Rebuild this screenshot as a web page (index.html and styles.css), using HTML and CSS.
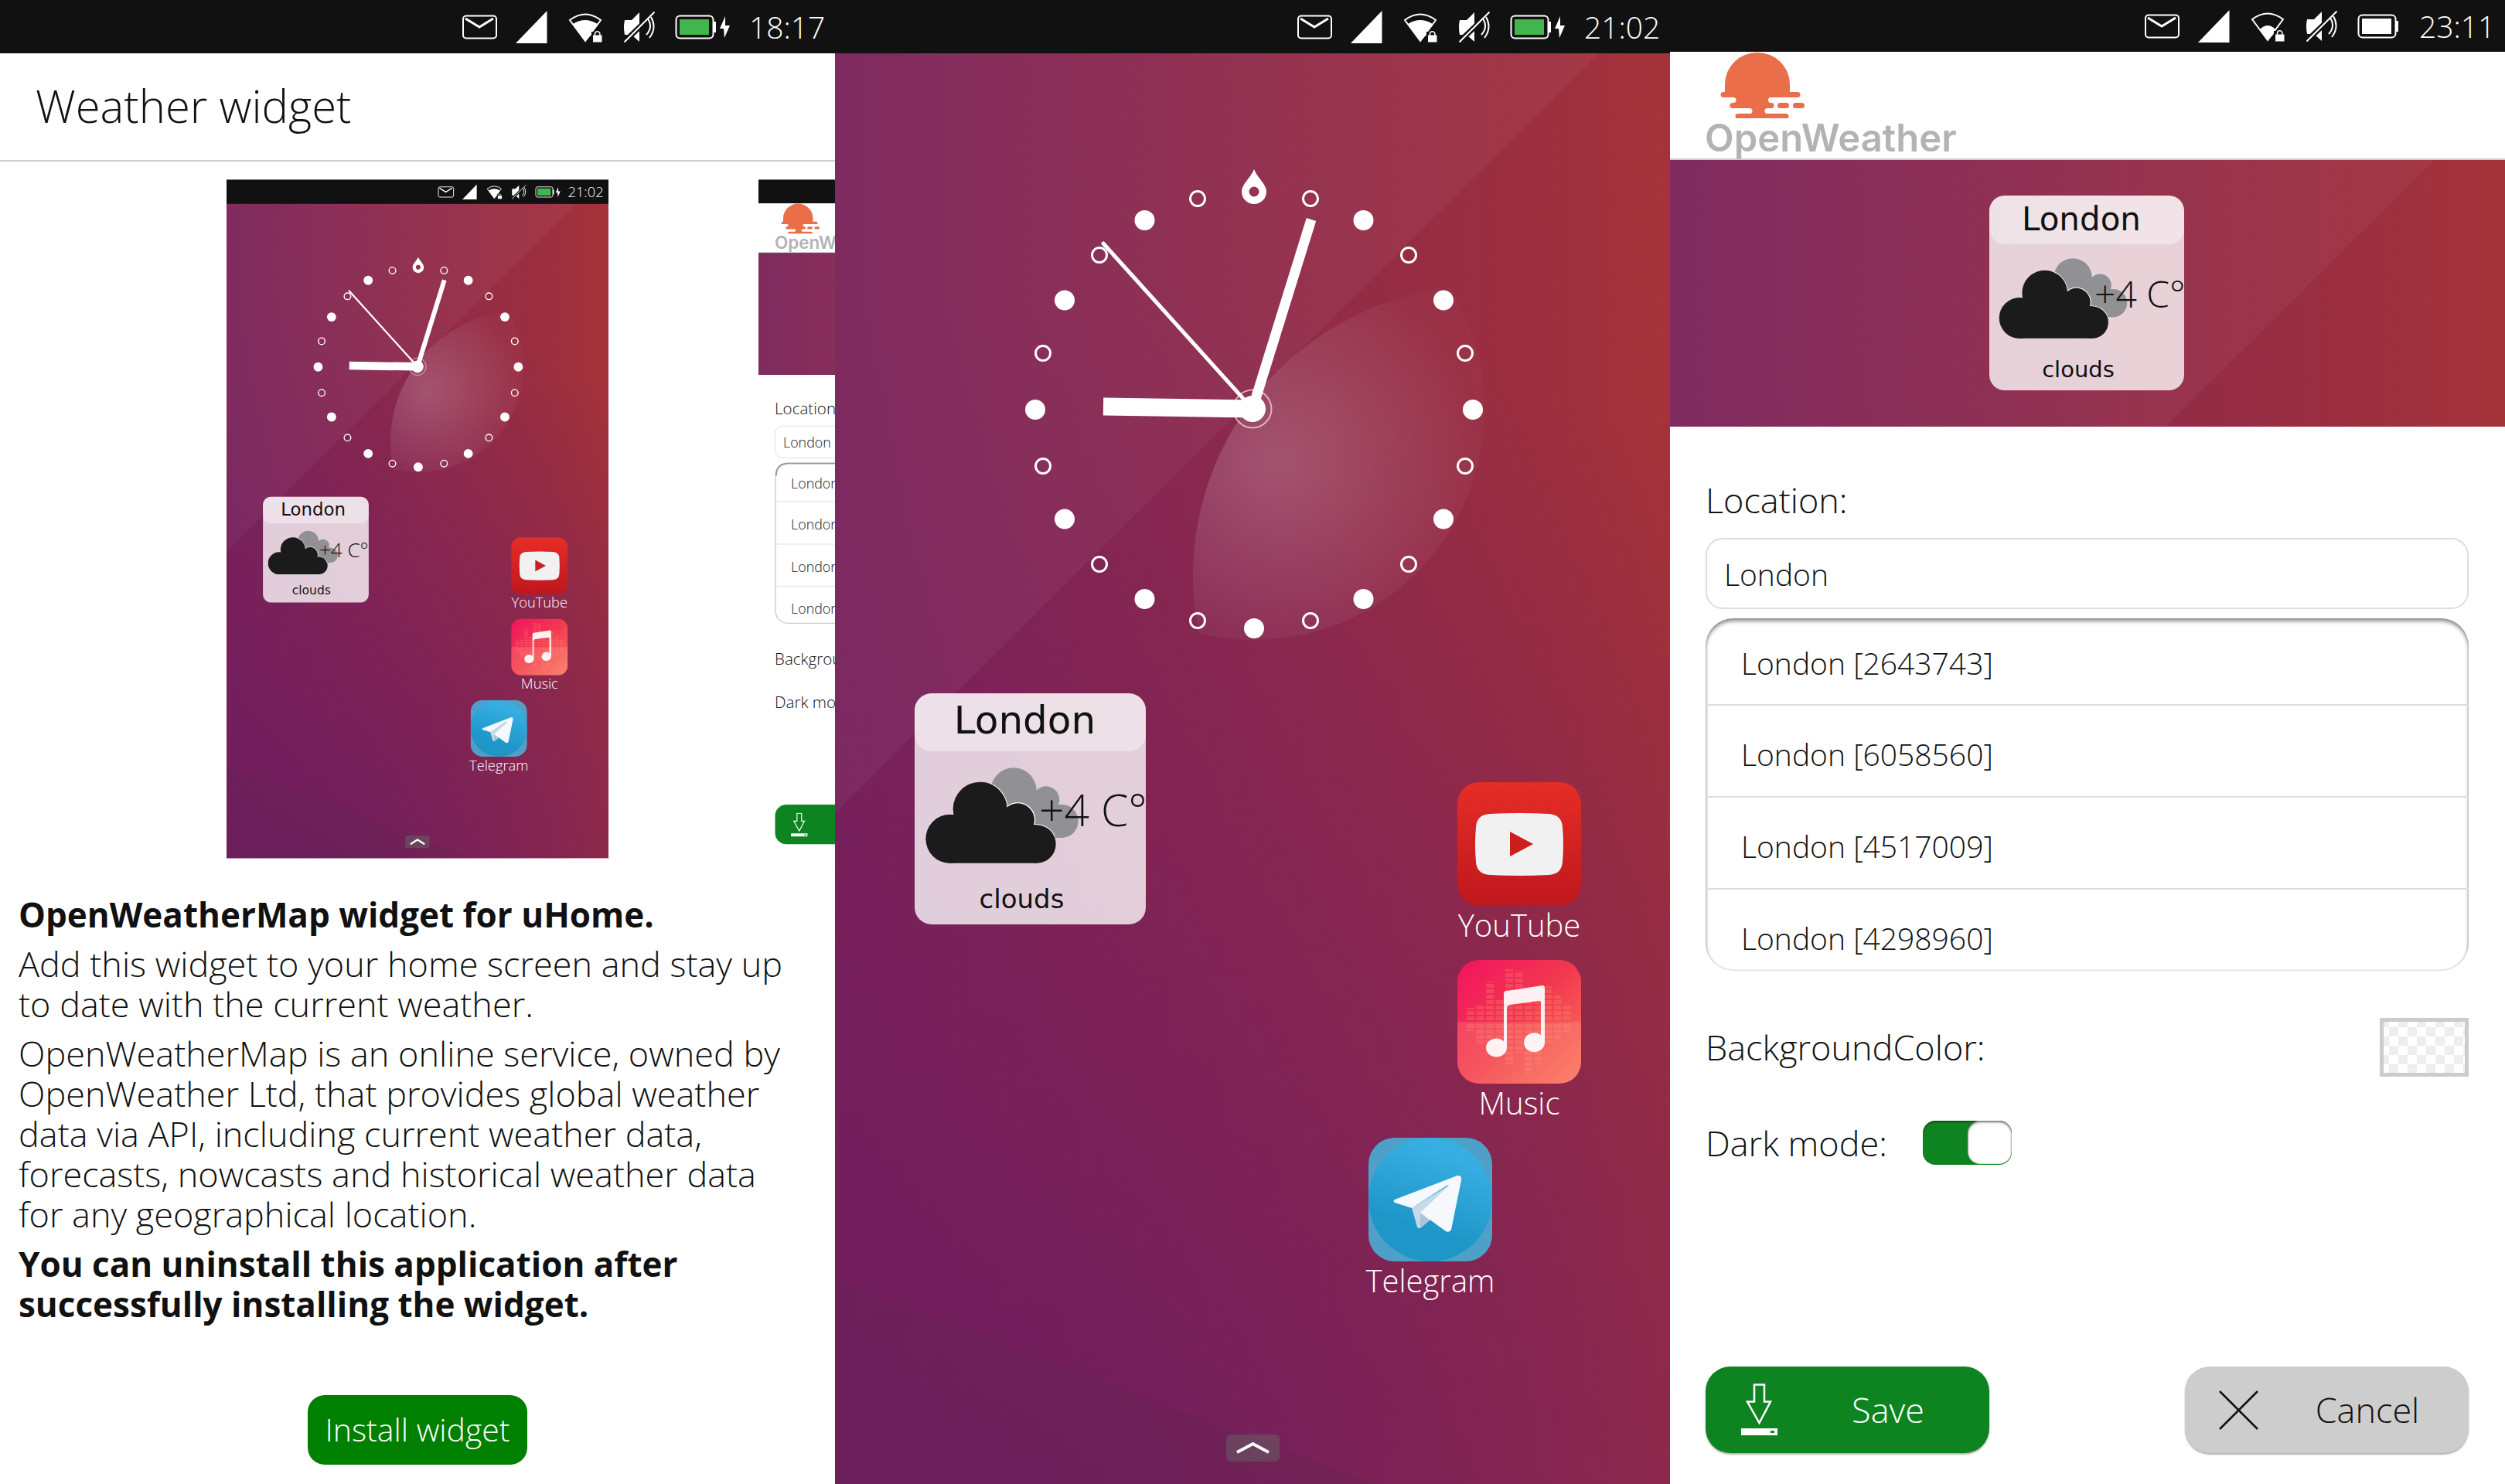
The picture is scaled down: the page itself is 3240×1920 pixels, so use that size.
FILE: index.html
```html
<!DOCTYPE html>
<html lang="en">
<head>
<meta charset="utf-8">
<title>Weather widget</title>
<meta name="viewport" content="width=device-width, initial-scale=1">
<link rel="stylesheet" href="styles.css">
</head>
<body>
<svg class="sprite" aria-hidden="true">
  <defs>
    <linearGradient id="wall" x1="0" y1="0" x2="1" y2="0">
      <stop offset="0" stop-color="#7a2259"/>
      <stop offset="0.5" stop-color="#8f2a4a"/>
      <stop offset="0.85" stop-color="#9d2f3f"/>
      <stop offset="1" stop-color="#a43339"/>
    </linearGradient>
    <radialGradient id="dusk" gradientUnits="userSpaceOnUse" cx="250" cy="2000" r="1700">
      <stop offset="0" stop-color="#691c62" stop-opacity="0.85"/>
      <stop offset="0.5" stop-color="#701c60" stop-opacity="0.45"/>
      <stop offset="1" stop-color="#701c60" stop-opacity="0"/>
    </radialGradient>
    <linearGradient id="band" x1="0" y1="0" x2="1" y2="0">
      <stop offset="0" stop-color="#fff" stop-opacity="0.04"/>
      <stop offset="1" stop-color="#fff" stop-opacity="0.04"/>
    </linearGradient>
    <radialGradient id="petal" gradientUnits="userSpaceOnUse" cx="572" cy="597" r="270">
      <stop offset="0" stop-color="#fff" stop-opacity="0.2"/>
      <stop offset="1" stop-color="#fff" stop-opacity="0.02"/>
    </radialGradient>
    <linearGradient id="yt" x1="0" y1="0" x2="0" y2="1">
      <stop offset="0" stop-color="#e62d27"/><stop offset="1" stop-color="#bf171d"/>
    </linearGradient>
    <linearGradient id="mus" x1="0" y1="0" x2="1" y2="1">
      <stop offset="0" stop-color="#f31260"/><stop offset="0.5" stop-color="#f23a4f"/><stop offset="1" stop-color="#fb7660"/>
    </linearGradient>
    <linearGradient id="tg" x1="0.65" y1="0.15" x2="0.45" y2="0.75">
      <stop offset="0" stop-color="#37aee2"/><stop offset="1" stop-color="#1e96c8"/>
    </linearGradient>
    <clipPath id="leaf"><circle cx="542" cy="530" r="298"/></clipPath>
    <clipPath id="rim"><path d="M425 380H800V668H425z"/></clipPath>
    <clipPath id="tile"><rect width="160" height="160" rx="28"/></clipPath>
  </defs>

  <symbol id="wallpaper" viewBox="0 0 1080 1851" preserveAspectRatio="xMidYMin slice">
    <rect width="1080" height="1851" fill="url(#wall)"/>
    <rect width="1080" height="1851" fill="url(#dusk)"/>
    <path d="M0 0H988L0 983z" fill="url(#band)"/>
    <path d="M0 1590L700 1851H0z" fill="#333" fill-opacity="0.08"/>
  </symbol>

  <symbol id="clock" viewBox="240 210 600 620">
    <circle cx="838" cy="745" r="375" fill="url(#petal)" clip-path="url(#leaf)"/>
    <path fill="#fff" fill-rule="evenodd" d="M542 219C546 230 558 238 558 248A16 16 0 0 1 526 248C526 238 538 230 542 219zM542 241.500a6.500 6.500 0 1 0 0 13a6.500 6.500 0 1 0 0-13z"/>
    <g fill="#fff">
      <circle cx="683.500" cy="285" r="13"/><circle cx="787" cy="388.500" r="13"/><circle cx="825" cy="530" r="13"/>
      <circle cx="787" cy="671.500" r="13"/><circle cx="683.500" cy="775" r="13"/><circle cx="542" cy="813" r="13"/>
      <circle cx="400.500" cy="775" r="13"/><circle cx="297" cy="671.500" r="13"/><circle cx="259" cy="530" r="13"/>
      <circle cx="297" cy="388.500" r="13"/><circle cx="400.500" cy="285" r="13"/>
    </g>
    <g fill="none" stroke="#fff" stroke-width="3">
      <circle cx="615" cy="257" r="9.500"/><circle cx="742" cy="330" r="9.500"/><circle cx="815" cy="457" r="9.500"/>
      <circle cx="815" cy="603" r="9.500"/><circle cx="742" cy="730" r="9.500"/><circle cx="615" cy="803" r="9.500"/>
      <circle cx="469" cy="803" r="9.500"/><circle cx="342" cy="730" r="9.500"/><circle cx="269" cy="603" r="9.500"/>
      <circle cx="269" cy="457" r="9.500"/><circle cx="342" cy="330" r="9.500"/><circle cx="469" cy="257" r="9.500"/>
      <circle cx="540" cy="529" r="24.500" stroke-width="2" stroke-opacity="0.6"/>
      <path d="M540 529L347 526" stroke-width="23"/>
      <path d="M540 529L616 284" stroke-width="13"/>
      <path d="M540 529L347 315" stroke-width="5" stroke-linecap="round"/>
    </g>
    <circle cx="540" cy="529" r="17" fill="#fff"/>
  </symbol>

  <symbol id="clouds" viewBox="172 397 594 372">
    <g fill="#919195">
      <circle cx="514" cy="487" r="89"/><circle cx="640" cy="522" r="52"/><circle cx="700" cy="605" r="65"/>
      <path d="M480 487H640L700 605V670H480z"/>
    </g>
    <g fill="#fff" clip-path="url(#rim)">
      <circle cx="384" cy="558" r="108"/><circle cx="530" cy="601" r="69"/><circle cx="604" cy="694" r="77"/>
    </g>
    <g fill="#1b1b1b">
      <circle cx="384" cy="558" r="105"/><circle cx="530" cy="601" r="65"/><circle cx="604" cy="694" r="74"/><circle cx="268" cy="674" r="95"/>
      <path d="M268 620H604V768H268z"/>
    </g>
  </symbol>

  <symbol id="youtube" viewBox="0 0 160 160">
    <rect width="160" height="160" rx="28" fill="url(#yt)"/>
    <path d="M42 41Q80 39 118 41Q135 42 136 58Q138 80 136 103Q135 119 118 120Q80 122 42 120Q25 119 24 103Q22 80 24 58Q25 42 42 41z" fill="#f1f1f1"/>
    <path d="M68 64L98 80L68 96z" fill="#cc1d1f"/>
  </symbol>

  <symbol id="music" viewBox="0 0 160 160">
    <g clip-path="url(#tile)">
      <rect width="160" height="160" fill="url(#mus)"/>
      <g stroke="#ff9a70" stroke-opacity="0.25" stroke-width="10" stroke-dasharray="5 2">
        <path d="M17 78V62M29.500 78V58M42 78V28M54.500 78V50M67 78V12M79.500 78V14M92 78V35M104.500 78V40M117 78V34M129.500 78V46M142 78V58"/>
      </g>
      <path d="M0 80H160V160H0z" fill="#ffb090" fill-opacity="0.22"/>
      <g stroke="#ff9a80" stroke-opacity="0.25" stroke-width="10" stroke-dasharray="5 2">
        <path d="M17 83V92M29.500 83V108M42 83V120M54.500 83V110M67 83V135M79.500 83V120M92 83V148M104.500 83V135M117 83V108M129.500 83V102M142 83V94"/>
      </g>
    </g>
    <path d="M60 44Q60 40 64 40L110 33Q113 33 113 37V106A13.500 12.500 0 1 1 108 97V56Q108 52 105 53L68 58Q64 59 64 62V114A13.500 12 0 1 1 60 105z" fill="#fff" fill-opacity="0.92"/>
  </symbol>

  <symbol id="telegram" viewBox="0 0 160 160">
    <rect width="160" height="160" rx="34" fill="#4ea0c8"/>
    <circle cx="80" cy="80" r="80" fill="url(#tg)"/>
    <path d="M56 91L63 115Q64 118 67 117L79 107L105 61z" fill="#c8daea"/>
    <path d="M67 97L66 117L79 107z" fill="#a9c6d8"/>
    <path d="M34 80L115 49Q121 48 120 55L107 119Q105 123 100 121L67 97L103 63Q105 60 101 62L56 91L34 84Q31 82 34 80z" fill="#f5f9fd"/>
  </symbol>

  <symbol id="tray" viewBox="0 0 260 69">
    <rect x="9" y="20.500" width="43" height="29" rx="4" fill="none" stroke="#fff" stroke-width="2"/>
    <path d="M12 24L30 35L48 24" fill="none" stroke="#fff" stroke-width="3"/>
    <path d="M77 56L117.500 14V56z" fill="#fff"/>
    <path d="M167 53L147 26Q167 11 187 26z" fill="none" stroke="#fff" stroke-width="2"/>
    <path d="M175 41V55H190V41z" fill="#111"/>
    <path d="M177 45.500H188.500V54.500H177z" fill="#fff"/>
    <path d="M179.500 46V44a3.200 3.200 0 0 1 6.400 0V46" fill="none" stroke="#fff" stroke-width="1.500"/>
    <path d="M218 26H227L237 16V54L227 45H218Q216 35 218 26z" fill="#fff"/>
    <path d="M217 54.500L257 16" stroke="#111" stroke-width="7"/>
    <path d="M217.500 54.500L256.500 15.500M248 24Q255 35 246 45M252 22Q260 36 250 49" stroke="#fff" stroke-width="2" fill="none"/>
  </symbol>
  <symbol id="wifi-fill" viewBox="0 0 260 69"><path d="M151 31Q167 21 183 31L177 40V43L167 53z" fill="#fff"/></symbol>
  <symbol id="wifi-low" viewBox="0 0 260 69"><path d="M157 39Q167 29 177 39L174 46L167 53z" fill="#fff"/></symbol>
  <symbol id="battery" viewBox="0 0 60 69">
    <rect x="5.500" y="20.500" width="48" height="29" rx="5" fill="none" stroke="#fff" stroke-width="2"/>
    <path d="M54 28H57V42H54z" fill="#fff"/>
    <path d="M10 25H48V45H10z" fill="currentColor"/>
  </symbol>
  <symbol id="bolt" viewBox="0 0 20 69"><path d="M8 21L1 37H6L7 49L14 33H8z" fill="#fff"/></symbol>

  <symbol id="sun" viewBox="0 0 120 86">
    <g fill="#eb6e4b">
      <path d="M12 52V42A42 41 0 0 1 96 42V52H106a3.500 3.500 0 0 1 0 7H70a4 4 0 0 0 0 7H72a3.500 3.500 0 0 1 0 7H67a3.500 3.500 0 0 0 0 7H91a3.500 3.500 0 0 1 0 7H29a3.500 3.500 0 0 1 0-7H44a3.500 3.500 0 0 0 0-7H22a3.500 3.500 0 0 1 0-7H23a3.500 3.500 0 0 0 0-7H10a3.500 3.500 0 0 1 0-7z"/>
      <rect x="80" y="66" width="15" height="7" rx="3.500"/><rect x="100" y="66" width="15" height="7" rx="3.500"/>
    </g>
  </symbol>
  <symbol id="download" viewBox="0 0 48 68">
    <path d="M18 1.500H31V23.500H39L24.500 51L9 23.500H18z" fill="none" stroke="#fff" stroke-width="2.500"/>
    <path fill="#fff" fill-rule="evenodd" d="M1 58H48V67H1zM39 61V64H44V61z"/>
  </symbol>
</svg>

<main class="shots">
  <section class="screen">
    <div class="status">
      <svg class="tray" aria-hidden="true"><use href="#wifi-fill"/><use href="#tray"/></svg>
      <svg class="battery charging" aria-hidden="true"><use href="#battery"/></svg>
      <svg class="bolt" aria-hidden="true"><use href="#bolt"/></svg>
      <time>18:17</time>
    </div>
    <header class="header"><h1>Weather widget</h1></header>
    <div class="gallery">
      <svg class="thumb" viewBox="0 0 1080 1920" role="img" aria-label="Home screen with the widget">
        <rect width="1080" height="69" fill="#111"/>
        <use href="#wifi-fill" x="590" width="260" height="69"/><use href="#tray" x="590" width="260" height="69"/>
        <g color="#42b450"><use href="#battery" x="869" width="60" height="69"/></g>
        <use href="#bolt" x="930" width="20" height="69"/>
        <text x="1066" y="50" font-size="40" fill="#fff" text-anchor="end">21:02</text>
        <use href="#wallpaper" y="69" width="1080" height="1851"/>
        <use href="#clock" x="240" y="210" width="600" height="620"/>
        <rect x="103" y="897" width="299" height="299" rx="22" fill="#fff" fill-opacity="0.78"/>
        <rect x="103" y="897" width="299" height="75" rx="22" fill="#fff" fill-opacity="0.38"/>
        <use href="#clouds" x="117" y="993" width="198" height="124"/>
        <g fill="#111" text-anchor="middle">
          <text class="dejavu" x="245" y="950" font-size="50">London</text>
          <text x="332" y="1068" font-size="57">+4 C°</text>
          <text class="dejavu" x="240" y="1174" font-size="34">clouds</text>
        </g>
        <use href="#youtube" x="805" y="1012" width="160" height="160"/>
        <use href="#music" x="805" y="1242" width="160" height="160"/>
        <use href="#telegram" x="690" y="1472" width="160" height="160"/>
        <g fill="#fff" text-anchor="middle" font-size="40">
          <text x="885" y="1211">YouTube</text><text x="885" y="1441">Music</text><text x="770" y="1671">Telegram</text>
        </g>
        <rect x="505" y="1856" width="69" height="35" rx="6" fill="#666" fill-opacity="0.5"/>
        <path d="M520 1880L540 1867L560 1880" fill="none" stroke="#fff" stroke-width="5"/>
      </svg>
      <svg class="thumb" viewBox="0 0 1080 1920" role="img" aria-label="Widget settings">
        <rect width="1080" height="1920" fill="#fff"/>
        <rect width="1080" height="67" fill="#111"/>
        <use href="#sun" x="58" y="67" width="120" height="86"/>
        <text class="inter" x="46" y="196" font-size="49" fill="#b3b3b3">OpenWeather</text>
        <path d="M0 206H1080" stroke="#ccc" stroke-width="2"/>
        <svg y="207" width="1080" height="345"><use href="#wallpaper" width="1080" height="1851"/></svg>
        <g fill="none" stroke="#ddd" stroke-width="2">
          <rect x="47" y="697" width="985" height="90" rx="22"/>
          <rect x="48" y="802" width="984" height="453" rx="36" stroke="#ccc" stroke-width="3"/>
          <path d="M50 838Q50 803 84 803H996" stroke="#999" stroke-width="4"/>
          <path d="M47 911H1033M47 1031H1033M47 1150H1033"/>
        </g>
        <g fill="#111">
          <g font-size="45"><text x="46" y="664">Location:</text><text x="46" y="1373">BackgroundColor:</text><text x="46" y="1494">Dark mode:</text></g>
          <g font-size="39"><text x="70" y="757">London</text><text x="92" y="873">London [2643743]</text><text x="92" y="990">London [6058560]</text><text x="92" y="1109">London [4517009]</text><text x="92" y="1228">London [4298960]</text></g>
        </g>
        <rect x="47" y="1768" width="366" height="112" rx="32" fill="#0e8420"/>
        <use href="#download" x="91" y="1791" width="48" height="68"/>
      </svg>
    </div>
    <div class="about">
      <p><strong>OpenWeatherMap widget for uHome.</strong></p>
      <p>Add this widget to your home screen and stay up<br>to date with the current weather.</p>
      <p>OpenWeatherMap is an online service, owned by<br>OpenWeather Ltd, that provides global weather<br>data via API, including current weather data,<br>forecasts, nowcasts and historical weather data<br>for any geographical location.</p>
      <p><strong>You can uninstall this application after<br>successfully installing the widget.</strong></p>
    </div>
    <button class="install" type="button">Install widget</button>
  </section>

  <section class="screen home">
    <div class="status">
      <svg class="tray" aria-hidden="true"><use href="#wifi-fill"/><use href="#tray"/></svg>
      <svg class="battery charging" aria-hidden="true"><use href="#battery"/></svg>
      <svg class="bolt" aria-hidden="true"><use href="#bolt"/></svg>
      <time>21:02</time>
    </div>
    <div class="desktop">
      <svg class="wallpaper" aria-hidden="true"><use href="#wallpaper"/></svg>
      <svg class="clock" role="img" aria-label="Clock"><use href="#clock"/></svg>
      <div class="desk">
        <article class="widget">
          <h2>London</h2>
          <div class="now"><svg aria-hidden="true"><use href="#clouds"/></svg><span>+4 C°</span></div>
          <p>clouds</p>
        </article>
        <nav class="apps">
          <a class="app" href="#youtube"><svg aria-hidden="true"><use href="#youtube"/></svg>YouTube</a>
          <a class="app" href="#music"><svg aria-hidden="true"><use href="#music"/></svg>Music</a>
          <a class="app inner" href="#telegram"><svg aria-hidden="true"><use href="#telegram"/></svg>Telegram</a>
        </nav>
      </div>
      <button class="drawer" type="button" aria-label="Open app drawer">
        <svg viewBox="0 0 69 35" aria-hidden="true"><path d="M14 23L34.500 12L55 23" fill="none" stroke="#fff" stroke-width="4"/></svg>
      </button>
    </div>
  </section>

  <section class="screen">
    <div class="status compact">
      <svg class="tray" aria-hidden="true"><use href="#wifi-low"/><use href="#tray"/></svg>
      <svg class="battery" aria-hidden="true"><use href="#battery"/></svg>
      <time>23:11</time>
    </div>
    <header class="brand">
      <svg aria-hidden="true"><use href="#sun"/></svg>
      <span>OpenWeather</span>
    </header>
    <div class="preview">
      <svg class="wallpaper" aria-hidden="true"><use href="#wallpaper"/></svg>
      <article class="widget small">
        <h2>London</h2>
        <div class="now"><svg aria-hidden="true"><use href="#clouds"/></svg><span>+4 C°</span></div>
        <p>clouds</p>
      </article>
    </div>
    <form class="settings">
      <label for="location">Location:</label>
      <input class="location" id="location" type="text" value="London">
      <ul class="results">
        <li><button type="button">London [2643743]</button></li>
        <li><button type="button">London [6058560]</button></li>
        <li><button type="button">London [4517009]</button></li>
        <li><button type="button">London [4298960]</button></li>
      </ul>
      <div class="row color"><label for="bg">BackgroundColor:</label><input class="swatch" id="bg" type="color"></div>
      <div class="row"><label for="dark">Dark mode:</label><input class="toggle" id="dark" type="checkbox" checked></div>
      <div class="actions">
        <button class="action save" type="button"><svg viewBox="0 0 48 68" aria-hidden="true"><use href="#download"/></svg><span>Save</span></button>
        <button class="action" type="button"><svg viewBox="0 0 48 68" aria-hidden="true"><path d="M0 10L49 59M49 10L0 59" stroke="#111" stroke-width="2.500"/></svg><span>Cancel</span></button>
      </div>
    </form>
  </section>
</main>
</body>
</html>
```
FILE: styles.css
```css
*, *::before { box-sizing: border-box; }

body {
  margin: 0;
  background: #fff;
  color: #111;
  font-family: "Open Sans", "Noto Sans", sans-serif;
  font-weight: 300;
}

h1, h2, p, ul { margin: 0; padding: 0; font-weight: 300; }
button, input { font: inherit; color: inherit; margin: 0; border: 0; padding: 0; }
svg { display: block; flex: none; }

.sprite { position: absolute; width: 0; height: 0; }

.shots {
  display: grid;
  grid-template-columns: repeat(3, minmax(0, 1fr));
  min-height: 100vh;
}

.screen { display: flex; flex-direction: column; overflow: hidden; }

/* status bar */
.status {
  display: flex;
  align-items: center;
  justify-content: flex-end;
  height: 69px;
  padding-right: 15px;
  background: #111;
  color: #fff;
}
.status.compact { height: 67px; }
.status time { width: 96px; font-size: 39px; line-height: 52px; text-align: right; }
.tray { width: 260px; height: 69px; }
.battery { width: 60px; height: 69px; margin-left: 19px; }
.battery.charging { color: #42b450; }
.bolt { width: 20px; height: 69px; margin-left: 1px; }
.bolt + time { margin-left: 19px; }
.battery + time { margin-left: 24px; }

/* installer screen */
.header { height: 140px; padding: 0 46px; border-bottom: 2px solid #ccc; }
.header h1 { font-size: 58px; line-height: 136px; }

.gallery { display: flex; gap: 194px; padding: 23px 0 0 calc(50% - 247px); }
.thumb { width: 494px; height: 879px; }
.dejavu { font-family: "DejaVu Sans", sans-serif; font-weight: 400; }
.inter { font-family: Inter, sans-serif; font-weight: 600; }

.about {
  display: grid;
  gap: 12px;
  padding: 46px 24px 0;
  font-size: 45px;
  line-height: 52px;
  white-space: nowrap;
}
.about strong { font-size: 44px; font-weight: 700; }

.install {
  align-self: center;
  width: 284px;
  height: 90px;
  margin: auto 0 25px;
  padding-bottom: 2px;
  border-radius: 22px;
  background: #008000;
  color: #fff;
  font-size: 41px;
}

/* home screen */
.desktop, .preview { position: relative; display: flex; flex-direction: column; }
.desktop { flex: 1; padding: 141px 0 29px; }
.wallpaper { position: absolute; inset: 0; width: 100%; height: 100%; }
.clock { position: relative; align-self: center; width: 600px; height: 620px; }
.desk { position: relative; display: flex; justify-content: space-between; padding: 67px 80px 0 103px; }

.widget {
  position: relative;
  width: 299px;
  height: 299px;
  border-radius: 22px;
  background: rgba(255, 255, 255, 0.78);
  text-align: center;
}
.widget h2, .widget p { padding-right: 14px; font-family: "DejaVu Sans", sans-serif; font-weight: 400; }
.widget h2 {
  height: 75px;
  border-radius: 22px;
  background: rgba(255, 255, 255, 0.38);
  font-size: 50px;
  line-height: 70px;
}
.widget p { padding-right: 22px; font-size: 34px; line-height: 44px; margin-top: 24px; }
.now { display: flex; padding: 21px 0 0 14px; height: 145px; white-space: nowrap; }
.now svg { width: 198px; height: 124px; }
.now span { margin-left: -51px; font-size: 57px; line-height: 64px; padding-top: 22px; }

.widget.small { width: 252px; height: 252px; border-radius: 20px; }
.small h2 { height: 63px; border-radius: 20px; font-size: 42px; line-height: 62px; }
.small p { font-size: 29px; line-height: 36px; margin-top: 22px; }
.small .now { height: 122px; padding: 18px 0 0 12px; }
.small .now svg { width: 167px; height: 104px; }
.small .now span { margin-left: -43px; font-size: 48px; line-height: 54px; padding-top: 19px; }

.apps { display: grid; gap: 20px; padding-top: 115px; }
.app {
  display: flex;
  flex-direction: column;
  align-items: center;
  width: 230px;
  color: #fff;
  font-size: 40px;
  line-height: 50px;
  text-decoration: none;
}
.app svg { width: 160px; height: 160px; }
.app.inner { margin-left: -115px; }

.drawer {
  position: relative;
  align-self: center;
  width: 69px;
  height: 35px;
  margin-top: auto;
  border-radius: 6px;
  background: rgba(100, 100, 100, 0.5);
}

/* settings screen */
.brand { height: 140px; padding-left: 45px; border-bottom: 2px solid #ccc; }
.brand svg { width: 120px; height: 86px; margin-left: 14px; }
.brand span {
  display: block;
  color: #b3b3b3;
  font: 600 49px/52px Inter, sans-serif;
}
.preview { align-items: center; padding: 46px 2px 47px 0; overflow: hidden; }
.preview .wallpaper { height: 1851px; }

.settings { display: flex; flex: 1; flex-direction: column; padding: 69px 47px 40px 46px; font-size: 45px; line-height: 52px; }
.location {
  height: 92px;
  margin-top: 23px;
  padding: 0 22px;
  border: 2px solid #ddd;
  border-radius: 22px;
  font-size: 39px;
}
.results {
  height: 456px;
  margin-top: 12px;
  border-radius: 36px;
  box-shadow: inset 0 4px 5px rgba(0, 0, 0, 0.4), inset 0 0 3px rgba(0, 0, 0, 0.3);
  overflow: hidden;
  list-style: none;
}
.results li { height: 119px; border-bottom: 2px solid #ddd; }
.results li:first-child { height: 113px; }
.results button { width: 100%; height: 117px; padding: 8px 46px 0; background: none; font-size: 39px; text-align: left; }
.results li:first-child button { height: 111px; padding-top: 4px; }
.row { display: flex; align-items: center; gap: 46px; margin-top: 57px; }
.row.color { justify-content: space-between; margin-top: 61px; }
.swatch {
  appearance: none;
  width: 115px;
  height: 76px;
  border: 5px solid #ccc;
  background: repeating-conic-gradient(#fff 0 25%, #eee 0 50%) 7px 7px / 24px 24px;
}
.swatch::-webkit-color-swatch { opacity: 0; }
.toggle {
  appearance: none;
  width: 115px;
  height: 57px;
  border-radius: 16px;
  background: #0e8420;
  box-shadow: inset 0 2px 2px rgba(0, 0, 0, 0.4);
}
.toggle::before {
  content: "";
  display: block;
  width: 57px;
  height: 56px;
  margin-left: auto;
  border-radius: 16px;
  background: #fff;
  box-shadow: inset 0 2px 3px rgba(0, 0, 0, 0.5), inset 0 0 2px rgba(0, 0, 0, 0.4);
}
.actions { display: flex; justify-content: space-between; margin-top: auto; }
.action {
  display: flex;
  align-items: center;
  width: 367px;
  height: 112px;
  padding-left: 45px;
  border-radius: 32px;
  background: #cdcdcd;
  box-shadow: 0 2px 2px rgba(0, 0, 0, 0.3);
}
.action.save { background: #0e8420; color: #fff; }
.action svg { width: 48px; height: 68px; overflow: visible; }
.action span { width: 190px; margin-left: 48px; text-align: center; }
```
